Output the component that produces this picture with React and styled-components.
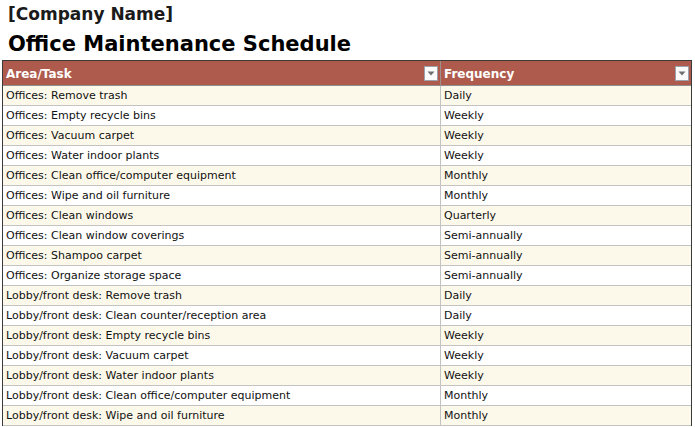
import React from "react";
import styled, { createGlobalStyle } from "styled-components";

const GlobalStyle = createGlobalStyle`
  html, body {
    margin: 0;
    padding: 0;
    background: #ffffff;
  }
  body {
    font-family: "DejaVu Sans", "Liberation Sans", sans-serif;
    color: #111;
  }
`;

const Page = styled.div`
  width: 695px;
  height: 427px;
  overflow: hidden;
  padding: 0 0 0 2px;
  box-sizing: border-box;
`;

const CompanyName = styled.h2`
  margin: 0;
  padding: 2px 0 0 6px;
  height: 27px;
  box-sizing: border-box;
  font-size: 17px;
  font-weight: bold;
  line-height: 24px;
  color: #1a1a1a;
`;

const Title = styled.h1`
  margin: 0;
  padding-left: 6px;
  height: 33px;
  font-size: 21px;
  font-weight: bold;
  line-height: 34px;
  color: #000;
`;

const Table = styled.div`
  width: 690px;
  border-top: 1px solid #3a3a3a;
  border-left: 1px solid #3a3a3a;
  border-right: 1px solid #3a3a3a;
  box-sizing: border-box;
`;

const Row = styled.div`
  display: grid;
  grid-template-columns: 437px 1fr;
  height: ${(p) => (p.$head ? "25px" : "20px")};
  background: ${(p) => (p.$head ? "#ae5b4d" : p.$alt ? "#fdf9ea" : "#ffffff")};
  border-bottom: 1px solid ${(p) => (p.$head ? "#8f8f8f" : "#c3c3c3")};
  box-sizing: border-box;
`;

const Cell = styled.div`
  display: flex;
  align-items: flex-end;
  padding: 0 3px 2px 3px;
  font-size: 11px;
  line-height: 14px;
  white-space: nowrap;
  overflow: hidden;
  color: #111;
  & + & {
    border-left: 1px solid #c3c3c3;
  }
`;

const HeadCell = styled.div`
  position: relative;
  display: flex;
  align-items: flex-end;
  padding: 0 3px 3px 3px;
  font-size: 12px;
  font-weight: bold;
  line-height: 15px;
  color: #ffffff;
  & + & {
    border-left: 1px solid #9c8f8c;
  }
`;

const FilterButton = styled.span`
  position: absolute;
  right: 2px;
  top: 5px;
  width: 14px;
  height: 15px;
  background: #fbfbfb;
  border: 1px solid #9aa3ad;
  box-sizing: border-box;
  display: flex;
  align-items: center;
  justify-content: center;
`;

const tasks = [
  ["Offices: Remove trash", "Daily"],
  ["Offices: Empty recycle bins", "Weekly"],
  ["Offices: Vacuum carpet", "Weekly"],
  ["Offices: Water indoor plants", "Weekly"],
  ["Offices: Clean office/computer equipment", "Monthly"],
  ["Offices: Wipe and oil furniture", "Monthly"],
  ["Offices: Clean windows", "Quarterly"],
  ["Offices: Clean window coverings", "Semi-annually"],
  ["Offices: Shampoo carpet", "Semi-annually"],
  ["Offices: Organize storage space", "Semi-annually"],
  ["Lobby/front desk: Remove trash", "Daily"],
  ["Lobby/front desk: Clean counter/reception area", "Daily"],
  ["Lobby/front desk: Empty recycle bins", "Weekly"],
  ["Lobby/front desk: Vacuum carpet", "Weekly"],
  ["Lobby/front desk: Water indoor plants", "Weekly"],
  ["Lobby/front desk: Clean office/computer equipment", "Monthly"],
  ["Lobby/front desk: Wipe and oil furniture", "Monthly"],
];

const Caret = () => (
  <svg width="8" height="5" viewBox="0 0 8 5">
    <path d="M0.5 0.5 L7.5 0.5 L4 4.5 Z" fill="#6f6f6f" />
  </svg>
);

const App = () => (
  <>
    <GlobalStyle />
    <Page>
      <CompanyName>[Company Name]</CompanyName>
      <Title>Office Maintenance Schedule</Title>
      <Table>
        <Row $head>
          <HeadCell>
            Area/Task
            <FilterButton>
              <Caret />
            </FilterButton>
          </HeadCell>
          <HeadCell>
            Frequency
            <FilterButton>
              <Caret />
            </FilterButton>
          </HeadCell>
        </Row>
        {tasks.map(([task, freq], i) => (
          <Row key={task} $alt={i % 2 === 0}>
            <Cell>{task}</Cell>
            <Cell>{freq}</Cell>
          </Row>
        ))}
      </Table>
    </Page>
  </>
);

export default App;
